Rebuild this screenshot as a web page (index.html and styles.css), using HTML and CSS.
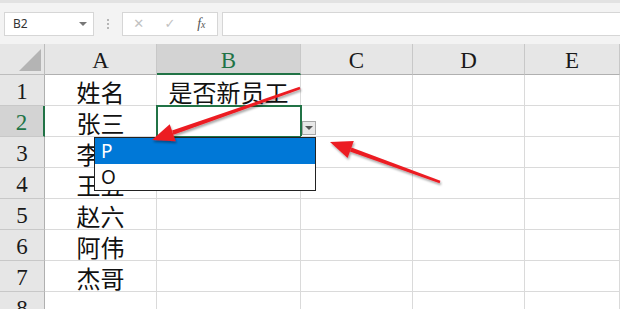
FILE: index.html
```html
<!DOCTYPE html>
<html lang="zh-CN">
<head>
    <meta charset="UTF-8">
    <title>数据验证下拉列表</title>
    <link rel="stylesheet" href="styles.css">
</head>
<body>
<div class="window">
    <div class="toolbar">
        <div class="name-box">
            <span>B2</span>
            <span class="caret"></span>
        </div>
        <div class="grip"><i></i><i></i><i></i></div>
        <div class="fx-buttons">
            <span class="fx-btn">&#x2715;</span>
            <span class="fx-btn">&#x2713;</span>
            <span class="fx-btn fx"><i>f</i><small>x</small></span>
        </div>
        <div class="formula-input"></div>
    </div>

    <div class="sheet">
        <div class="corner"><span class="select-all"></span></div>
        <div class="col-head">A</div>
        <div class="col-head active">B</div>
        <div class="col-head">C</div>
        <div class="col-head">D</div>
        <div class="col-head">E</div>

        <div class="row-head">1</div>
        <div class="cell">姓名</div>
        <div class="cell">是否新员工</div>
        <div class="cell"></div><div class="cell"></div><div class="cell"></div>

        <div class="row-head active">2</div>
        <div class="cell">张三</div>
        <div class="cell selected"></div>
        <div class="cell"></div><div class="cell"></div><div class="cell"></div>

        <div class="row-head">3</div>
        <div class="cell">李四</div>
        <div class="cell"></div>
        <div class="cell"></div><div class="cell"></div><div class="cell"></div>

        <div class="row-head">4</div>
        <div class="cell">王五</div>
        <div class="cell"></div>
        <div class="cell"></div><div class="cell"></div><div class="cell"></div>

        <div class="row-head">5</div>
        <div class="cell">赵六</div>
        <div class="cell"></div>
        <div class="cell"></div><div class="cell"></div><div class="cell"></div>

        <div class="row-head">6</div>
        <div class="cell">阿伟</div>
        <div class="cell"></div>
        <div class="cell"></div><div class="cell"></div><div class="cell"></div>

        <div class="row-head">7</div>
        <div class="cell">杰哥</div>
        <div class="cell"></div>
        <div class="cell"></div><div class="cell"></div><div class="cell"></div>

        <div class="row-head">8</div>
        <div class="cell"></div>
        <div class="cell"></div>
        <div class="cell"></div><div class="cell"></div><div class="cell"></div>
    </div>

    <!-- validation dropdown for B2 -->
    <div class="drop-btn"><span></span></div>
    <ul class="drop-list">
        <li class="current">P</li>
        <li>O</li>
    </ul>

    <!-- red annotation arrows -->
    <svg class="arrows" width="620" height="309" viewBox="0 0 620 309">
        <defs>
            <filter id="shade" x="-10%" y="-10%" width="120%" height="130%">
                <feDropShadow dx="1" dy="2" stdDeviation="1.2" flood-color="#000" flood-opacity="0.35"/>
            </filter>
        </defs>
        <g fill="#ec1c24" filter="url(#shade)">
            <polygon points="300.4,89.2 299.6,86.8 172,130.6 173.4,134.8"/>
            <polygon points="152,140 175.7,141.2 169.7,124.2"/>
            <polygon points="440.4,180.8 439.6,183.2 349.9,151.6 351.5,147.4"/>
            <polygon points="330,142 353.8,141 347.6,158"/>
        </g>
    </svg>
</div>
</body>
</html>
```

FILE: styles.css
```css
body {
    margin: 0;
    background: #ffffff;
    font-family: "Liberation Serif", "Noto Sans CJK SC", serif;
}
.window {
    position: relative;
    width: 620px;
    height: 309px;
    overflow: hidden;
}
.toolbar {
    display: flex;
    align-items: center;
    height: 44px;
    box-sizing: border-box;
    padding: 8px 0 8px 4px;
    background: #f3f3f3;
    border-top: 3px solid #e2e2e2;
}
.name-box {
    display: flex;
    align-items: center;
    justify-content: space-between;
    width: 90px;
    height: 24px;
    box-sizing: border-box;
    padding: 0 6px 0 8px;
    background: #fff;
    border: 1px solid #d6d6d6;
    font-family: "Noto Sans", sans-serif;
    font-size: 12px;
    color: #333;
}
.caret {
    width: 0;
    height: 0;
    border-left: 4px solid transparent;
    border-right: 4px solid transparent;
    border-top: 4px solid #777;
}
.grip {
    display: flex;
    flex-direction: column;
    gap: 2px;
    width: 28px;
    align-items: center;
}
.grip i {
    width: 2px;
    height: 2px;
    background: #b6b6b6;
}
.fx-buttons {
    display: flex;
    align-items: center;
    width: 96px;
    height: 24px;
    box-sizing: border-box;
    background: #fff;
    border: 1px solid #d6d6d6;
}
.fx-btn {
    flex: 1;
    text-align: center;
    font-family: "DejaVu Sans", sans-serif;
    font-size: 13px;
    color: #c2c2c2;
}
.fx {
    color: #555;
    font-family: "Liberation Serif", serif;
    font-size: 14px;
}
.fx small {
    font-size: 10px;
    font-style: italic;
}
.formula-input {
    flex: 1;
    height: 24px;
    margin-left: 4px;
    box-sizing: border-box;
    background: #fff;
    border: 1px solid #d6d6d6;
    border-right: none;
}

.sheet {
    display: grid;
    grid-template-columns: 45px 112px 144px 112px 112px 1fr;
    grid-auto-rows: 31px;
}
.corner, .col-head, .row-head {
    background: #e6e6e6;
    box-sizing: border-box;
    display: flex;
    align-items: center;
    justify-content: center;
    font-size: 23px;
    color: #1a1a1a;
}
.corner {
    position: relative;
    border-right: 1px solid #bdbdbd;
    border-bottom: 1px solid #bdbdbd;
}
.select-all {
    position: absolute;
    right: 3px;
    bottom: 3px;
    width: 0;
    height: 0;
    border-left: 22px solid transparent;
    border-bottom: 22px solid #b4b4b4;
}
.col-head {
    padding-top: 4px;
    border-right: 1px solid #c8c8c8;
    border-bottom: 1px solid #b0b0b0;
}
.row-head {
    padding-top: 4px;
    border-right: 1px solid #b0b0b0;
    border-bottom: 1px solid #c8c8c8;
}
.col-head.active {
    background: #d3d3d3;
    color: #217346;
    border-bottom: 2px solid #217346;
}
.row-head.active {
    background: #d3d3d3;
    color: #217346;
    border-right: 2px solid #217346;
}
.cell {
    box-sizing: border-box;
    border-right: 1px solid #dadada;
    border-bottom: 1px solid #dadada;
    display: flex;
    align-items: center;
    justify-content: center;
    padding-top: 3px;
    font-size: 24px;
    color: #111;
}
.cell.selected {
    outline: 2px solid #217346;
    outline-offset: -1px;
}

.drop-btn {
    position: absolute;
    left: 302px;
    top: 121px;
    width: 14px;
    height: 14px;
    box-sizing: border-box;
    background: #e8e8e8;
    border: 1px solid #a8a8a8;
    display: flex;
    align-items: center;
    justify-content: center;
}
.drop-btn span {
    width: 0;
    height: 0;
    border-left: 4px solid transparent;
    border-right: 4px solid transparent;
    border-top: 4px solid #555;
}
.drop-list {
    position: absolute;
    left: 94px;
    top: 137px;
    width: 222px;
    margin: 0;
    padding: 0;
    list-style: none;
    background: #fff;
    border: 1px solid #222;
    box-sizing: border-box;
    font-family: "Noto Sans", sans-serif;
    font-size: 19px;
}
.drop-list li {
    height: 26px;
    line-height: 26px;
    padding-left: 6px;
    color: #111;
}
.drop-list li.current {
    background: #0078d7;
    color: #fff;
}
.arrows {
    position: absolute;
    left: 0;
    top: 0;
    pointer-events: none;
}
```
